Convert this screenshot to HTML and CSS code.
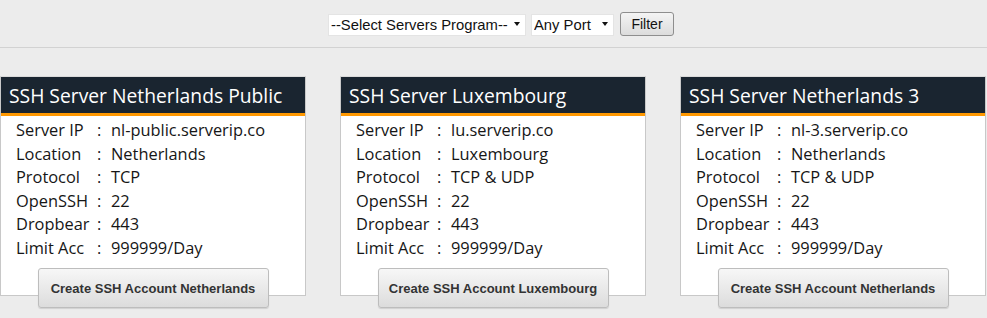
FILE: index.html
```html
<!DOCTYPE html>
<html lang="en">
<head>
  <meta charset="UTF-8">
  <title>SSH Servers</title>
  <meta name="viewport" content="width=device-width, initial-scale=1">
  <link rel="stylesheet" href="styles.css">
</head>
<body>
  <div class="topbar">
    <form class="filter">
      <span class="select-wrap sel-program">
        <select>
          <option>--Select Servers Program--</option>
        </select>
      </span>
      <span class="select-wrap sel-port">
        <select>
          <option>Any Port</option>
        </select>
      </span>
      <button type="button" class="btn-filter">Filter</button>
    </form>
  </div>

  <div class="servers">
    <div class="card">
      <div class="box">
        <h3>SSH Server Netherlands Public</h3>
        <table>
          <tr><td>Server IP</td><td>:</td><td>nl-public.serverip.co</td></tr>
          <tr><td>Location</td><td>:</td><td>Netherlands</td></tr>
          <tr><td>Protocol</td><td>:</td><td>TCP</td></tr>
          <tr><td>OpenSSH</td><td>:</td><td>22</td></tr>
          <tr><td>Dropbear</td><td>:</td><td>443</td></tr>
          <tr><td>Limit Acc</td><td>:</td><td>999999/Day</td></tr>
        </table>
      </div>
      <button type="button" class="btn-create">Create SSH Account Netherlands</button>
    </div>

    <div class="card">
      <div class="box">
        <h3>SSH Server Luxembourg</h3>
        <table>
          <tr><td>Server IP</td><td>:</td><td>lu.serverip.co</td></tr>
          <tr><td>Location</td><td>:</td><td>Luxembourg</td></tr>
          <tr><td>Protocol</td><td>:</td><td>TCP &amp; UDP</td></tr>
          <tr><td>OpenSSH</td><td>:</td><td>22</td></tr>
          <tr><td>Dropbear</td><td>:</td><td>443</td></tr>
          <tr><td>Limit Acc</td><td>:</td><td>999999/Day</td></tr>
        </table>
      </div>
      <button type="button" class="btn-create">Create SSH Account Luxembourg</button>
    </div>

    <div class="card">
      <div class="box">
        <h3>SSH Server Netherlands 3</h3>
        <table>
          <tr><td>Server IP</td><td>:</td><td>nl-3.serverip.co</td></tr>
          <tr><td>Location</td><td>:</td><td>Netherlands</td></tr>
          <tr><td>Protocol</td><td>:</td><td>TCP &amp; UDP</td></tr>
          <tr><td>OpenSSH</td><td>:</td><td>22</td></tr>
          <tr><td>Dropbear</td><td>:</td><td>443</td></tr>
          <tr><td>Limit Acc</td><td>:</td><td>999999/Day</td></tr>
        </table>
      </div>
      <button type="button" class="btn-create">Create SSH Account Netherlands</button>
    </div>
  </div>
</body>
</html>
```

FILE: styles.css
```css
body {
  margin: 0;
  background: #ececec;
  font-family: "Open Sans", "DejaVu Sans", sans-serif;
  color: #161616;
}
.topbar {
  height: 47px;
  border-bottom: 1px solid #d2d2d2;
  display: flex;
  justify-content: center;
}
.filter {
  display: flex;
  align-items: center;
  gap: 5px;
  margin-top: 12px;
  margin-left: 15px;
  height: 24px;
}
.select-wrap {
  position: relative;
  display: block;
  height: 22px;
}
.select-wrap::after {
  content: "";
  position: absolute;
  right: 6px;
  top: 9px;
  border-left: 3.5px solid transparent;
  border-right: 3.5px solid transparent;
  border-top: 4px solid #111;
  pointer-events: none;
}
select {
  -webkit-appearance: none;
  appearance: none;
  width: 100%;
  height: 22px;
  font-family: "Liberation Sans", Arial, sans-serif;
  font-size: 14.8px;
  border: 1px solid #e4e4e4;
  border-radius: 0;
  background: #fff;
  color: #111;
  padding: 0 16px 0 2px;
  outline: none;
}
.sel-program {
  width: 198px;
}
.sel-port {
  width: 83px;
}
.btn-filter {
  font-family: "Liberation Sans", Arial, sans-serif;
  font-size: 14px;
  height: 24px;
  width: 54px;
  margin-left: 1px;
  border: 1px solid #8e8e8e;
  border-radius: 3px;
  background: linear-gradient(#f4f4f4, #dcdcdc);
  color: #111;
}
.servers {
  display: flex;
  gap: 34px;
  padding-top: 28px;
  padding-bottom: 10px;
}
.card {
  width: 306px;
  flex: none;
  display: flex;
  flex-direction: column;
}
.box {
  background: #fff;
  border: 1px solid #c8c8c8;
  border-top-color: #dadada;
  height: 218px;
}
.box h3 {
  margin: 0;
  height: 36px;
  line-height: 37px;
  padding-left: 8px;
  background: #1a2530;
  color: #fff;
  font-weight: normal;
  font-size: 19.3px;
  border-bottom: 3px solid #ff9800;
  white-space: nowrap;
}
.box table {
  margin: 2px 0 0 15px;
  border-collapse: collapse;
  font-size: 16.4px;
}
.box td {
  padding: 0;
  height: 23.6px;
  line-height: 23.6px;
}
.box td:first-child {
  width: 81px;
}
.box td:nth-child(2) {
  width: 14px;
}
.btn-create {
  align-self: center;
  width: 231px;
  height: 40px;
  margin-top: -28px;
  flex: none;
  font-family: "Liberation Sans", Arial, sans-serif;
  font-weight: bold;
  font-size: 13px;
  color: #333;
  border: 1px solid #bdbdbd;
  border-radius: 3px;
  background: linear-gradient(#f7f7f7, #dcdcdc);
  box-shadow: 0 1px 1px rgba(0, 0, 0, 0.12);
}
```
